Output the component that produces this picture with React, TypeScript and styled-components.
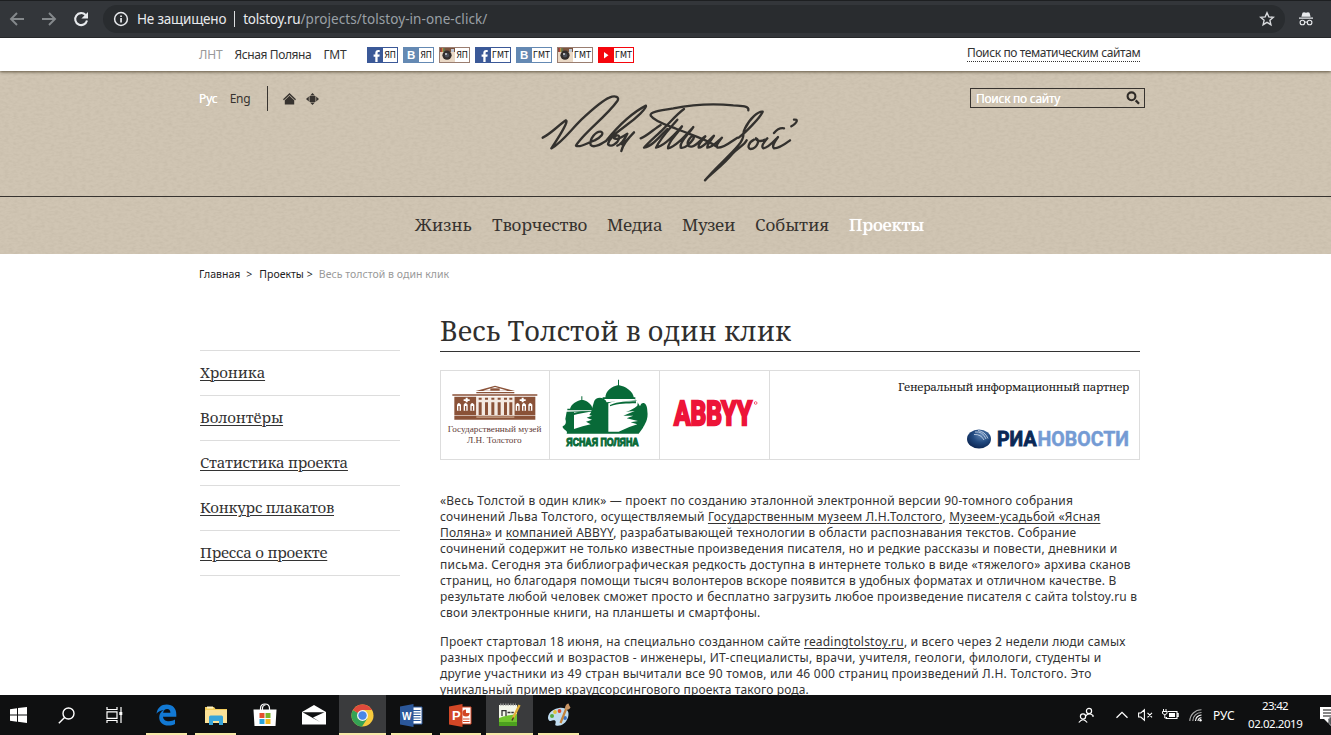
import React from 'react';
import styled, { createGlobalStyle, css } from 'styled-components';

const SANS = '"Noto Sans", "Open Sans", sans-serif';
const SERIF = '"Noto Serif", "Liberation Serif", serif';
const INK = '#37332f';

const GlobalStyle = createGlobalStyle`
  * { box-sizing: border-box; }
  body { margin: 0; overflow: hidden; font-family: ${SANS}; font-size: 12px; color: #333; background: #fff; }
  svg { display: block; flex: none; overflow: visible; }
`;

const Screen = styled.div`
  height: 735px;
  display: flex;
  flex-direction: column;
  overflow: hidden;
`;

const Tracked = styled.span<{ $track?: number }>`
  letter-spacing: ${p => p.$track ?? 0}px;
  white-space: nowrap;
`;

/* ---------- browser bar ---------- */

const BrowserBar = styled.div`
  flex: none;
  height: 38px;
  padding: 4px 16px 4px 8px;
  display: flex;
  align-items: center;
  background: #33363a;
  border-top: 1px solid #1d1f21;
  border-bottom: 1px solid #26282a;
`;

const NavButtons = styled.div`
  display: flex;
  gap: 14px;
  width: 95px;
`;

const AddressPill = styled.div`
  width: 1182px;
  height: 28px;
  margin-right: 13px;
  padding: 0 10px;
  border-radius: 14px;
  display: flex;
  align-items: center;
  background: #292c2f;
  color: #e8eaed;
  font-size: 13.5px;
`;

const Warning = styled(Tracked)`
  margin-left: 8px;
`;

const PillDivider = styled.div`
  width: 1px;
  height: 16px;
  margin: 0 8px 0 8px;
  background: #dcdee0;
`;

const UrlPath = styled(Tracked)`
  flex: 1;
  color: #9aa0a6;
`;

/* ---------- site top bar ---------- */

const Page = styled.div`
  flex: 1;
  min-height: 0;
  overflow: hidden;
`;

const TopBar = styled.div`
  position: relative;
  z-index: 1;
  height: 33px;
  padding: 0 0 0 199px;
  width: 1331px;
  display: flex;
  align-items: center;
  background: #fff;
  box-shadow: 0 1px 3px rgba(60, 50, 30, 0.75);
`;

const SiteLinks = styled.div`
  display: flex;
  gap: 12px;
  width: 168px;
`;

const SiteLink = styled(Tracked)<{ $muted?: boolean }>`
  color: ${p => (p.$muted ? '#999' : '#333')};
`;

const SocialList = styled.div`
  display: flex;
  gap: 5px;
  width: 600px;
`;

const SocialBadge = styled.div<{ $color: string; $wide?: boolean }>`
  width: ${p => (p.$wide ? 36 : 31)}px;
  height: 16px;
  padding: 1px 1px 1px 0;
  display: flex;
  background: ${p => p.$color};
`;

const BadgeLabel = styled.span`
  flex: 1;
  display: flex;
  align-items: center;
  justify-content: center;
  background: #fff;
  color: #111;
  font: 9px "DejaVu Sans Condensed", sans-serif;
`;

const TopicSearch = styled(Tracked)`
  line-height: 14px;
  height: 16px;
  margin-top: -1px;
  border-bottom: 1px dotted #333;
`;

/* ---------- header ---------- */

const Header = styled.header`
  position: relative;
  height: 183px;
  background: #d0c5b3;
`;

const Texture = styled.svg`
  position: absolute;
  inset: 0;
  width: 100%;
  height: 100%;
`;

const HeaderTop = styled.div`
  position: relative;
  height: 126px;
  padding: 14px 0 0 199px;
  display: grid;
  grid-template-columns: 331px 280px 160px 175px;
  border-bottom: 1px solid ${INK};
`;

const LanguageBar = styled.div`
  height: 27px;
  display: flex;
  align-items: center;
`;

const Language = styled(Tracked)<{ $active?: boolean }>`
  margin-right: 12px;
  color: ${p => (p.$active ? '#fff' : INK)};
  ${p => p.$active && css`text-shadow: 0 0 0.6px #fff;`}
`;

const LanguageDivider = styled.div`
  width: 1px;
  height: 25px;
  margin: 0 15px 0 4px;
  background: ${INK};
`;

const HeaderIcons = styled.div`
  display: flex;
  gap: 10px;
`;

const SearchBox = styled.div`
  grid-column: 4;
  height: 20px;
  margin-top: 3px;
  padding: 0 4px 0 5px;
  display: flex;
  align-items: center;
  justify-content: space-between;
  border: 1px solid ${INK};
  color: #fff;
  text-shadow: 0 0 0.6px #fff;
`;

const MainNav = styled.nav`
  position: relative;
  height: 55px;
  padding-left: 415px;
  display: flex;
  gap: 20px;
  align-items: center;
  font: 17px/26px ${SERIF};
  color: ${INK};
`;

const NavItem = styled(Tracked)<{ $width: number; $active?: boolean }>`
  width: ${p => p.$width}px;
  color: ${p => (p.$active ? '#fff' : 'inherit')};
  ${p => p.$active && css`text-shadow: 0 0 0.8px #fff;`}
`;

/* ---------- content ---------- */

const Breadcrumbs = styled.div`
  height: 40px;
  padding-left: 199px;
  display: flex;
  align-items: center;
  font-size: 10.5px;
`;

const Crumb = styled(Tracked)<{ $gap?: number; $muted?: boolean }>`
  margin-right: ${p => p.$gap ?? 0}px;
  color: ${p => (p.$muted ? '#999' : '#222')};
`;

const Columns = styled.div`
  display: grid;
  grid-template-columns: 201px 700px;
  column-gap: 39px;
  padding-left: 200px;
`;

const SideMenu = styled.ul`
  list-style: none;
  width: 200px;
  margin: 56px 0 0;
  padding: 0;
  border-top: 1px solid #ddd;
`;

const SideItem = styled.li`
  height: 45px;
  border-bottom: 1px solid #ddd;
  font: 15px/43px ${SERIF};
`;

const SideLink = styled(Tracked)`
  text-decoration: underline;
  text-underline-offset: 1.5px;
  text-decoration-thickness: 1px;
`;

const Title = styled.h1`
  height: 38px;
  margin: 20px 0 18px;
  border-bottom: 1px solid #333;
  font: 27px/34px ${SERIF};
  color: #302f2e;
`;

const Partners = styled.div`
  height: 90px;
  margin-bottom: 33px;
  display: flex;
  border: 1px solid #ddd;
`;

const PartnerCell = styled.div`
  width: 110px;
  border-right: 1px solid #ddd;
  &:first-child { width: 109px; }
`;

const MediaPartner = styled.div`
  flex: 1;
  padding: 7px 9px 0 0;
  display: flex;
  flex-direction: column;
  align-items: flex-end;
  gap: 32px;
  font: 11.5px/18px ${SERIF};
  color: #222;
`;

const PartnerCaption = styled(Tracked)`
  margin-right: 1px;
`;

const Paragraph = styled.p`
  margin: 0 0 13px;
  line-height: 16px;
`;

const Line = styled(Tracked)`
  display: block;
`;

const Link = styled.span`
  text-decoration: underline;
  text-underline-offset: 1.5px;
  text-decoration-thickness: 1px;
`;

/* ---------- taskbar ---------- */

const Taskbar = styled.div`
  flex: none;
  height: 40px;
  width: 1345px;
  margin-left: -5px;
  display: flex;
  background: #0f1011;
`;

const SystemSlot = styled.div`
  width: 48px;
  display: flex;
  align-items: center;
  justify-content: center;
`;

const AppList = styled.div`
  display: flex;
  margin-left: 4px;
  width: 940px;
`;

const AppSlot = styled.div<{ $open?: boolean; $active?: boolean }>`
  width: ${p => (p.$active ? 47 : 41)}px;
  margin: ${p => (p.$active ? '0 1px' : '0 4px')};
  padding-top: ${p => (p.$open ? 2 : 0)}px;
  display: flex;
  align-items: center;
  justify-content: center;
  background: ${p => (p.$active ? '#3a3b3d' : 'transparent')};
  border-bottom: ${p => (p.$open ? '2px solid #f8e9a8' : 'none')};
`;

const Tray = styled.div`
  display: flex;
  align-items: center;
  color: #fff;
`;

const TrayItem = styled.div<{ $width: number }>`
  width: ${p => p.$width}px;
`;

const Clock = styled.div`
  width: 54px;
  margin-right: 18px;
  text-align: center;
  line-height: 18px;
  font-size: 11.5px;
`;

/* ---------- drawings ---------- */

const Signature = () => (
  <svg width="280" height="110" viewBox="0 0 840 330" fill="none" stroke="#33312e" strokeWidth="7" strokeLinecap="round" strokeLinejoin="round">
    <path d="M38 158C60 148 84 122 108 106C116 108 92 148 64 190C92 176 120 138 154 104C184 76 214 48 238 38C256 30 270 36 262 48C228 96 158 146 138 182C150 190 174 172 194 166C214 156 224 144 212 140C198 138 178 162 182 180C192 190 212 178 228 168C264 124 308 82 348 62C352 68 318 100 290 120C264 140 238 156 234 178C244 188 262 176 268 160C270 148 256 148 252 160C262 166 280 154 292 146C284 164 270 180 262 182M276 178C290 168 300 154 312 142C296 158 278 180 274 198" />
    <path d="M332 160C350 154 372 132 392 120M462 72C440 88 424 108 402 130C380 152 360 168 342 188C366 184 388 156 412 132" />
    <path d="M655 76C658 64 636 62 610 61C560 56 490 58 430 70C384 77 358 82 362 92C374 110 410 120 440 132C484 150 530 162 558 184" />
    <path d="M442 104C420 130 392 158 378 188C402 184 430 154 456 124C440 150 414 168 414 190C436 186 462 156 490 126C474 150 448 170 452 188C464 192 482 174 490 162C496 150 486 150 478 162C468 176 474 188 488 184C502 180 514 162 526 154C516 168 502 178 506 188C520 188 534 168 552 152C544 166 530 178 532 188C546 188 560 172 576 158C566 172 556 180 562 188C582 190 602 170 622 158" />
    <path d="M626 158C650 140 690 98 698 80C686 78 660 98 644 132C634 150 650 150 626 180C600 212 556 248 525 286C548 262 582 238 606 208C622 190 644 180 650 166" />
    <path d="M672 164C656 172 650 190 662 192C680 190 692 166 678 160C676 166 690 172 706 164M712 160C702 172 692 184 700 190C716 188 732 168 744 156C734 170 724 184 732 190C750 190 764 178 780 166M732 144C742 132 752 128 762 130M792 104C804 102 804 112 784 124" />
  </svg>
);

const BackIcon = () => (
  <svg width="18" height="18" viewBox="0 0 18 18" fill="none" stroke="#85898c" strokeWidth="1.9"><path d="M16 9H3M9 3L3 9l6 6" /></svg>
);
const ForwardIcon = () => (
  <svg width="18" height="18" viewBox="0 0 18 18" fill="none" stroke="#85898c" strokeWidth="1.9"><path d="M2 9h13M9 3l6 6-6 6" /></svg>
);
const ReloadIcon = () => (
  <svg width="18" height="18" viewBox="0 0 18 18"><path d="M13.6 5A6 6 0 1 0 15 10.6" fill="none" stroke="#e8eaed" strokeWidth="2.1" /><path d="M16 2v6.6H9.4z" fill="#e8eaed" /></svg>
);
const InfoIcon = () => (
  <svg width="16" height="16" viewBox="0 0 16 16"><circle cx="8" cy="8" r="6.4" fill="none" stroke="#e8eaed" strokeWidth="1.5" /><path d="M7.2 7h1.7v4.4H7.2zM7.2 4.4h1.7V6H7.2z" fill="#e8eaed" /></svg>
);
const StarIcon = () => (
  <svg width="16" height="16" viewBox="0 0 16 16"><path d="M8 1.8l1.8 4.1 4.5.4-3.4 3 1 4.4L8 11.4l-3.9 2.3 1-4.4-3.4-3 4.5-.4z" fill="none" stroke="#d8dadd" strokeWidth="1.4" /></svg>
);
const IncognitoIcon = () => (
  <svg width="16" height="16" viewBox="0 0 16 16" fill="#e8eaed">
    <path d="M1 6.6h14v1.2H1zM3.4 5.7l1.1-4L6 1.2l2 .6 2-.6 1.5.5 1.1 4z" />
    <g fill="none" stroke="#e8eaed" strokeWidth="1.1"><circle cx="4.4" cy="11.5" r="2.3" /><circle cx="11.6" cy="11.5" r="2.3" /><path d="M6.7 11.3q1.3-.7 2.6 0" /></g>
  </svg>
);

const FacebookMark = () => (
  <svg width="16" height="14" viewBox="0 0 16 14"><path d="M8.3 14V8.7H6.6V6.5h1.7V5c0-2 1-3.1 3-3.1h1.4v2.2h-1c-.8 0-1.1.3-1.1 1v1.4h2.1l-.3 2.2h-1.8V14z" fill="#fff" /></svg>
);
const VkMark = () => (
  <svg width="16" height="14" viewBox="0 0 16 14"><text x="4" y="11.3" fontFamily="Liberation Sans" fontSize="11.5" fontWeight="700" fill="#fff">B</text></svg>
);
const InstagramMark = () => (
  <svg width="16" height="14" viewBox="0 0 16 14">
    <path d="M1 0h15v5H1z" fill="#7b543e" /><path d="M1 4h15v10H1z" fill="#ead9c6" />
    <path d="M2 0h1v4H2z" fill="#b8413a" /><path d="M3.3 0h1v4h-1z" fill="#d2a94a" /><path d="M4.6 0h1v4h-1z" fill="#4f8a5a" />
    <path d="M12 1h3v3h-3z" fill="#bfc6d2" />
    <circle cx="8" cy="7.200" r="4.600" fill="#322d2c" /><circle cx="8" cy="7.200" r="2.200" fill="#4c4f58" /><circle cx="7" cy="6" r="1" fill="#d5d8dd" />
  </svg>
);
const YoutubeMark = () => (
  <svg width="16" height="14" viewBox="0 0 16 14"><path d="M6 4l4.5 3.2L6 10.4z" fill="#fff" /></svg>
);

const HomeIcon = () => (
  <svg width="13" height="12" viewBox="0 0 13 12"><path d="M6.5 0L13 6.3l-.9.9-5.6-5.3L.9 7.200 0 6.300z" fill={INK} /><path d="M6.500 2.800l4.700 4.500V11.500H1.800V7.300z" fill={INK} /></svg>
);
const MapIcon = () => (
  <svg width="13" height="12" viewBox="0 0 13 12" fill={INK}><path d="M3.500 3h6v6h-6zM6.500 0l2.400 2.400H4.100zM6.500 12l2.400-2.400H4.100zM0 6l2.800-2.400v4.800zM13 6l-2.800-2.400v4.800z" /></svg>
);
const MagnifierIcon = () => (
  <svg width="14" height="14" viewBox="0 0 14 14" fill="none" stroke="#2f2b27"><circle cx="5.500" cy="5.300" r="3.900" strokeWidth="2.100" /><path d="M9.700 9.400l3.300 3.300" strokeWidth="2.300" /></svg>
);

const MuseumLogo = () => (
  <svg width="108" height="88" viewBox="14 184 324 264" fill="#8a5238">
    <path d="M118 244L176 228l60 16zM120 247h114v4H120zM48 254h255v4H48z" />
    <path d="M140 243l36-11 38 11z" fill="#fff" /><path d="M162 236h28v7h-28z" />
    <path d="M54 261h66v56H54zM234 261h63v56h-63z" />
    <path d="M120 261h114v58H120z" fill="#f3e9e1" />
    {[134, 153, 172, 191, 210, 226].map(x => <path key={x} d={`M${x - 7} 264h9v6h-9zM${x - 7} 278h9v38h-9z`} />)}
    {[62, 82, 102, 238, 257, 276].map(x => <path key={x} d={`M${x} 303v-18q5-10 12 0v18z`} fill="#fff" />)}
    {[66, 86, 106, 242, 261, 280].map(x => <path key={x} d={`M${x} 303v-14h4v14z`} />)}
    <path d="M82 269h18v5H82zM88 264h6v14h-6zM250 269h18v5h-18zM256 264h6v14h-6z" fill="#fff" />
    <path d="M54 318h243v12H54z" /><path d="M120 320h114v5H120z" fill="#b98f75" />
    <g fill="#634039" fontFamily="Liberation Serif" fontSize="24.500">
      <text x="34" y="368" textLength="281" lengthAdjust="spacingAndGlyphs">Государственный музей</text>
      <text x="92" y="399" textLength="164" lengthAdjust="spacingAndGlyphs">Л.Н. Толстого</text>
    </g>
  </svg>
);

const YasnayaLogo = () => (
  <svg width="109" height="88" viewBox="342 184 327 264" fill="#086a38">
    <path d="M546 210h3v20h-3zM508 266C508 242 528 230 547 226C568 230 592 244 594 266zM436 260h3v12h-3zM402 298C406 282 420 274 438 270C456 274 468 284 470 298zM500 263h98v5h-98zM394 297h82v5h-82z" />
    <path d="M392 306L466 304L474 276C478 260 506 260 512 278L600 270L612 290C616 274 634 276 634 304C638 330 626 344 620 356L608 372H392C398 362 378 360 380 350C388 346 392 340 388 328Z" />
    <path d="M517 281C545 268 575 271 606 273L604 288C594 296 584 302 570 306L596 304L562 318L592 318L572 326L606 334L584 338L604 344L580 352L548 366H517Z" fill="#fff" />
    <path d="M522 286C548 275 572 276 600 275V281C572 282 548 281 522 290Z" />
    <path d="M414 308L466 306L460 316L468 318L452 324L468 330L450 336L464 344L440 350L414 358Z" fill="#fff" />
    <path d="M414 310C430 305 445 305 462 306C445 310 430 310 414 316z" />
    <text x="391" y="409" textLength="217" lengthAdjust="spacingAndGlyphs" fontFamily="Liberation Sans" fontWeight="700" fontSize="31" stroke="#086a38" strokeWidth="3">ЯСНАЯ ПОЛЯНА</text>
  </svg>
);

const AbbyyLogo = () => (
  <svg width="109" height="88" viewBox="672 184 327 264" fill="#ed1438">
    <text x="714" y="346" textLength="234" lengthAdjust="spacingAndGlyphs" fontFamily="Roboto" fontWeight="700" fontSize="98" stroke="#ed1438" strokeWidth="7">ABBYY</text>
    <circle cx="959" cy="280" r="4" fill="none" stroke="#ed1438" strokeWidth="2" />
  </svg>
);

const RiaLogo = () => (
  <svg width="164" height="22" viewBox="0 0 164 22">
    <defs><radialGradient id="globe" cx=".6" cy=".3" r=".75"><stop offset="0" stopColor="#6086b5" /><stop offset=".5" stopColor="#21497f" /><stop offset="1" stopColor="#0b2450" /></radialGradient></defs>
    <ellipse cx="13" cy="11" rx="12" ry="9.500" fill="url(#globe)" />
    <path d="M9 4q8-1 11 7M12 2.500q7 1 10 8M8 6.500q7-.5 10 5.500" fill="none" stroke="#cfdcee" strokeWidth=".8" />
    <g fontFamily="Roboto" fontWeight="700" fontSize="20">
      <text x="31" y="18" textLength="39.500" lengthAdjust="spacingAndGlyphs" fill="#0a2856" stroke="#0a2856" strokeWidth=".8">РИА</text>
      <text x="71.500" y="18" textLength="91.500" lengthAdjust="spacingAndGlyphs" fill="#749bd4" stroke="#749bd4" strokeWidth=".5">НОВОСТИ</text>
    </g>
  </svg>
);

const WindowsIcon = () => (
  <svg width="17" height="16" viewBox="0 0 17 16" fill="#fff"><path d="M0 2.200l7-1v6.300H0zM8 1.100L17 0v7.500H8zM0 8.500h7v6.300l-7-1zM8 8.500h9V16l-9-1.200z" /></svg>
);
const TaskSearchIcon = () => (
  <svg width="17" height="17" viewBox="0 0 17 17" fill="none" stroke="#fff" strokeWidth="1.400"><circle cx="10.500" cy="6.500" r="5.500" /><path d="M6.600 10.400L.8 16.200" /></svg>
);
const TaskViewIcon = () => (
  <svg width="17" height="16" viewBox="0 0 17 16" fill="none" stroke="#fff" strokeWidth="1.200"><path d="M1 0v2.500h10V0M1 16v-2.500h10V16M1 4.800h10v6.500H1zM15 0v16" /><path d="M13.300 5h3v3h-3z" fill="#fff" stroke="none" /></svg>
);
const EdgeIcon = () => (
  <svg width="21" height="22" viewBox="0 0 21 22"><path d="M.5 9.800C1.300 3.800 5.200.5 10.700.5c6.200 0 9.600 4.200 9.600 9.700v2.500H7c.2 3.200 2.900 4.500 6 4.500 2.400 0 4.300-.6 6-1.600v4.500c-1.900 1-4.200 1.500-6.600 1.500-5.500 0-9.200-3.200-9.200-8.300 0-3.300 1.800-5.900 4.600-7.300C4.600 6.300 2.200 7.500.5 9.800zM7.100 8.800h7.300c0-2.200-1.100-3.700-3.300-3.700-2.100 0-3.600 1.400-4 3.700z" fill="#1279d4" /></svg>
);
const ExplorerIcon = () => (
  <svg width="22" height="19" viewBox="0 0 22 19"><path d="M0 1h9l1.500 2H22v14H0z" fill="#f3cd5d" /><path d="M1 4h21v13H0V5z" fill="#fbe298" /><path d="M4 19v-8q0-1.500 1.500-1.500h11Q18 9.500 18 11v8h-4v-4H8v4z" fill="#38a5da" /><path d="M2 .5h6v2H2z" fill="#fff3c4" /></svg>
);
const StoreIcon = () => (
  <svg width="24" height="24" viewBox="0 0 24 24"><path d="M7.500 8V5.500q0-4.500 4.500-4.500t4.500 4.500V8M9.500 7q-.5-5 3-5" fill="none" stroke="#fff" strokeWidth="1.200" /><path d="M.5 6.500h23l-1 16.500h-21z" fill="#fff" /><path d="M6.500 10h5v5h-5z" fill="#e5502d" /><path d="M12.500 10h5v5h-5z" fill="#7db52a" /><path d="M6.500 16h5v5h-5z" fill="#2aa3dd" /><path d="M12.500 16h5v5h-5z" fill="#f5b81f" /></svg>
);
const MailIcon = () => (
  <svg width="24" height="20" viewBox="0 0 24 20"><path d="M0 7L12 0l12 7v12.500H0z" fill="#fff" /><path d="M.5 7.200h22L11 12.500l7 4.500z" fill="#101112" /></svg>
);
const ChromeIcon = () => (
  <svg width="23" height="23" viewBox="0 0 24 24"><circle cx="12" cy="12" r="11.500" fill="#f7ca3d" /><path d="M2 6.300A11.500 11.500 0 0 0 11.500 23.500L17 15 12 12z" fill="#35a355" /><path d="M2 6.300A11.500 11.500 0 0 1 22 6.300H12v6z" fill="#df4a3c" /><circle cx="12" cy="12" r="5.700" fill="#f4f6f8" /><circle cx="12" cy="12" r="4.400" fill="#4a86e8" /></svg>
);
const WordIcon = () => (
  <svg width="23" height="23" viewBox="0 0 23 23"><path d="M11 3h11v17H11z" fill="#fff" stroke="#2b579a" /><path d="M13 6.500h7.500M13 9h7.500M13 11.500h7.500M13 14h7.500M13 16.500h7.500" stroke="#2b579a" /><path d="M0 2.500L13.500 0v23L0 20.500z" fill="#2b579a" /><text x="2" y="15.500" fontFamily="Liberation Sans" fontWeight="700" fontSize="11" textLength="9.500" lengthAdjust="spacingAndGlyphs" fill="#fff">W</text></svg>
);
const PowerPointIcon = () => (
  <svg width="23" height="23" viewBox="0 0 23 23"><path d="M11 3h11v17H11z" fill="#fff" stroke="#d24726" /><path d="M14 15h6.500M14 17.500h6.500" stroke="#d24726" /><circle cx="17" cy="9" r="3.600" fill="#d24726" /><path d="M17 9V5h4v4z" fill="#fff" /><path d="M0 2.500L13.500 0v23L0 20.500z" fill="#d24726" /><text x="3" y="16" fontFamily="Liberation Sans" fontWeight="700" fontSize="13" fill="#fff">P</text></svg>
);
const NotepadIcon = () => (
  <svg width="23" height="24" viewBox="0 0 23 24"><path d="M1 2h18v21H1z" fill="#f4f7ec" /><path d="M1 15q9-3 18-4v12H1z" fill="#72c62f" /><path d="M1 19h18v4H1z" fill="#4ca01f" /><path d="M2 1.500h16" stroke="#8d8f8d" strokeWidth="2" strokeDasharray="1.500 1" /><path d="M4 13V7M4 7.700h4V13M9.500 9.500h3M13.300 9.500h2.500" fill="none" stroke="#333" strokeWidth="1.300" /><path d="M21.500 2L14.500 16" stroke="#e2b13a" strokeWidth="2.400" /><path d="M15.500 14.500l-1.500 3" stroke="#4b3a23" strokeWidth="1.500" /></svg>
);
const PaintIcon = () => (
  <svg width="24" height="24" viewBox="0 0 24 24"><path d="M12 5C20 4 23 9 21 14.500C19 20.500 14 23.500 9 22.500C7 22 10 19 8 17.500C6 16.500 4 19 2 17.500C-1 14 3 6 12 5z" fill="#bfdcf0" /><circle cx="5" cy="13" r="2" fill="#57a83e" /><circle cx="8" cy="9" r="1.900" fill="#e2c13b" /><circle cx="12.500" cy="8" r="1.900" fill="#d6492f" /><circle cx="18" cy="15" r="1.900" fill="#3a70bf" /><path d="M19.500 5L13.500 20" stroke="#c2823c" strokeWidth="2.200" /><path d="M18 6q0-5 3.500-5.500q1 3 2 4-2 3.500-5.500 1.500z" fill="#c99564" /></svg>
);

const PeopleIcon = () => (
  <svg width="16" height="17" viewBox="0 0 16 17" fill="none" stroke="#fff" strokeWidth="1.200"><circle cx="11" cy="4" r="2.600" /><path d="M7.500 9Q11 5 15 8.500V10" /><circle cx="5" cy="9.500" r="2.600" /><path d="M.8 15.500Q5 10 9.200 15.500" /></svg>
);
const ChevronIcon = () => (
  <svg width="12" height="8" viewBox="0 0 12 8" fill="none" stroke="#fff" strokeWidth="1.300"><path d="M.5 6.800L6 1.300l5.500 5.500" /></svg>
);
const MutedIcon = () => (
  <svg width="16" height="12" viewBox="0 0 16 12" fill="none" stroke="#fff" strokeWidth="1.100"><path d="M.6 4h2.200L6.400.8v10.400L2.800 8H.6zM9.500 3.800l4.500 4.500M14 3.800L9.500 8.300" /></svg>
);
const BatteryIcon = () => (
  <svg width="17" height="12" viewBox="0 0 17 12"><path d="M5.500 2.500h9.500v7H4.500V8M15 4.500h1.200v3H15" fill="none" stroke="#fff" strokeWidth="1.100" /><path d="M7 4h6v4H7z" fill="#fff" /><path d="M1.500 0v2.500M4 0v2.500M.5 2.500h4.500v2q-2.200 2.500-4.500 0zM2.800 5.500V9h2" fill="none" stroke="#fff" /></svg>
);
const WifiIcon = () => (
  <svg width="13" height="13" viewBox="0 0 13 13" fill="none" stroke="#aaa" strokeWidth="1.100"><path d="M.8 12A11.500 11.500 0 0 1 12.500.8M3.800 12a8.500 8.500 0 0 1 8.700-8.500" /><path d="M6.500 12a6 6 0 0 1 6-6M9 12a3.500 3.500 0 0 1 3.500-3.300" stroke="#fff" /><circle cx="11.500" cy="11.200" r="1.200" fill="#fff" stroke="none" /></svg>
);
const NotificationIcon = () => (
  <svg width="20" height="22" viewBox="0 0 20 22"><path d="M0 3h18v12H8v4l-4-4H0z" fill="#fff" /><path d="M3 6h12M3 9h12M3 12h8" stroke="#111" strokeWidth="1.100" /><circle cx="14" cy="17" r="5.500" fill="#55585b" stroke="#a9abad" /></svg>
);

/* ---------- data ---------- */

const socials = [
  { mark: <FacebookMark />, color: '#3b5998', label: 'ЯП' },
  { mark: <VkMark />, color: '#6489b3', label: 'ЯП' },
  { mark: <InstagramMark />, color: '#9a7d70', label: 'ЯП' },
  { mark: <FacebookMark />, color: '#3b5998', label: 'ГМТ' },
  { mark: <VkMark />, color: '#6489b3', label: 'ГМТ' },
  { mark: <InstagramMark />, color: '#9a7d70', label: 'ГМТ' },
  { mark: <YoutubeMark />, color: '#f5060d', label: 'ГМТ' },
];

const navItems: [string, number, number][] = [
  ['Жизнь', 57, 0], ['Творчество', 95, -0.2], ['Медиа', 55, -0.35],
  ['Музеи', 53, -0.3], ['События', 74, 0], ['Проекты', 75, -0.15],
];

const sideItems: [string, number][] = [
  ['Хроника', -0.1], ['Волонтёры', -0.13], ['Статистика проекта', -0.23], ['Конкурс плакатов', -0.22], ['Пресса о проекте', -0.18],
];

export default function App() {
  return (
    <Screen>
      <GlobalStyle />
      <BrowserBar>
        <NavButtons><BackIcon /><ForwardIcon /><ReloadIcon /></NavButtons>
        <AddressPill>
          <InfoIcon />
          <Warning $track={-0.2}>Не защищено</Warning>
          <PillDivider />
          <Tracked $track={-0.25}>tolstoy.ru</Tracked>
          <UrlPath $track={0.08}>/projects/tolstoy-in-one-click/</UrlPath>
          <StarIcon />
        </AddressPill>
        <IncognitoIcon />
      </BrowserBar>

      <Page>
        <TopBar>
          <SiteLinks>
            <SiteLink $muted $track={-0.2}>ЛНТ</SiteLink>
            <SiteLink $track={-0.38}>Ясная Поляна</SiteLink>
            <SiteLink $track={-0.2}>ГМТ</SiteLink>
          </SiteLinks>
          <SocialList>
            {socials.map((s, i) => (
              <SocialBadge key={i} $color={s.color} $wide={s.label.length > 2}>
                {s.mark}
                <BadgeLabel>{s.label}</BadgeLabel>
              </SocialBadge>
            ))}
          </SocialList>
          <TopicSearch $track={-0.4}>Поиск по тематическим сайтам</TopicSearch>
        </TopBar>

        <Header>
          <Texture>
            <filter id="paper" x="0" y="0" width="100%" height="100%">
              <feTurbulence type="fractalNoise" baseFrequency="0.22 0.42" numOctaves="2" seed="4" />
              <feColorMatrix values="0 0 0 0 0.47  0 0 0 0 0.41  0 0 0 0 0.32  0.6 0 0 0 -0.22" />
            </filter>
            <rect width="100%" height="100%" filter="url(#paper)" />
          </Texture>
          <HeaderTop>
            <LanguageBar>
              <Language $active $track={-0.1}>Рус</Language>
              <Language $track={-0.2}>Eng</Language>
              <LanguageDivider />
              <HeaderIcons><HomeIcon /><MapIcon /></HeaderIcons>
            </LanguageBar>
            <Signature />
            <SearchBox><Tracked $track={-0.28}>Поиск по сайту</Tracked><MagnifierIcon /></SearchBox>
          </HeaderTop>
          <MainNav>
            {navItems.map(([label, width, track], i) => (
              <NavItem key={label} $width={width} $track={track} $active={i === 5}>{label}</NavItem>
            ))}
          </MainNav>
        </Header>

        <Breadcrumbs>
          <Crumb $gap={6}>Главная</Crumb>
          <Crumb $gap={7}>&gt;</Crumb>
          <Crumb $gap={3}>Проекты</Crumb>
          <Crumb $gap={6}>&gt;</Crumb>
          <Crumb $muted $track={0.03}>Весь толстой в один клик</Crumb>
        </Breadcrumbs>

        <Columns>
          <SideMenu>
            {sideItems.map(([label, track]) => (
              <SideItem key={label}><SideLink $track={track}>{label}</SideLink></SideItem>
            ))}
          </SideMenu>
          <main>
            <Title><Tracked $track={0.1}>Весь Толстой в один клик</Tracked></Title>
            <Partners>
              <PartnerCell><MuseumLogo /></PartnerCell>
              <PartnerCell><YasnayaLogo /></PartnerCell>
              <PartnerCell><AbbyyLogo /></PartnerCell>
              <MediaPartner>
                <PartnerCaption $track={-0.31}>Генеральный информационный партнер</PartnerCaption>
                <RiaLogo />
              </MediaPartner>
            </Partners>
            <Paragraph>
              <Line $track={0.21}>«Весь Толстой в один клик» — проект по созданию эталонной электронной версии 90-томного собрания</Line>
              <Line $track={0.2}>сочинений Льва Толстого, осуществляемый <Link>Государственным музеем Л.Н.Толстого</Link>, <Link>Музеем-усадьбой «Ясная</Link></Line>
              <Line $track={0.2}><Link>Поляна»</Link> и <Link>компанией ABBYY</Link>, разрабатывающей технологии в области распознавания текстов. Собрание</Line>
              <Line $track={0.2}>сочинений содержит не только известные произведения писателя, но и редкие рассказы и повести, дневники и</Line>
              <Line $track={0.24}>письма. Сегодня эта библиографическая редкость доступна в интернете только в виде «тяжелого» архива сканов</Line>
              <Line $track={0.19}>страниц, но благодаря помощи тысяч волонтеров вскоре появится в удобных форматах и отличном качестве. В</Line>
              <Line $track={0.235}>результате любой человек сможет просто и бесплатно загрузить любое произведение писателя с сайта tolstoy.ru в</Line>
              <Line $track={0.19}>свои электронные книги, на планшеты и смартфоны.</Line>
            </Paragraph>
            <Paragraph>
              <Line $track={0.2}>Проект стартовал 18 июня, на специально созданном сайте <Link>readingtolstoy.ru</Link>, и всего через 2 недели люди самых</Line>
              <Line $track={0.26}>разных профессий и возрастов - инженеры, ИТ-специалисты, врачи, учителя, геологи, филологи, студенты и</Line>
              <Line $track={0.26}>другие участники из 49 стран вычитали все 90 томов, или 46 000 страниц произведений Л.Н. Толстого. Это</Line>
              <Line $track={0.15}>уникальный пример краудсорсингового проекта такого рода.</Line>
            </Paragraph>
          </main>
        </Columns>
      </Page>

      <Taskbar>
        <SystemSlot><WindowsIcon /></SystemSlot>
        <SystemSlot><TaskSearchIcon /></SystemSlot>
        <SystemSlot><TaskViewIcon /></SystemSlot>
        <AppList>
          <AppSlot $open><EdgeIcon /></AppSlot>
          <AppSlot $open><ExplorerIcon /></AppSlot>
          <AppSlot><StoreIcon /></AppSlot>
          <AppSlot><MailIcon /></AppSlot>
          <AppSlot $open $active><ChromeIcon /></AppSlot>
          <AppSlot $open><WordIcon /></AppSlot>
          <AppSlot $open><PowerPointIcon /></AppSlot>
          <AppSlot $open $active><NotepadIcon /></AppSlot>
          <AppSlot $open><PaintIcon /></AppSlot>
        </AppList>
        <Tray>
          <TrayItem $width={38}><PeopleIcon /></TrayItem>
          <TrayItem $width={22}><ChevronIcon /></TrayItem>
          <TrayItem $width={24}><MutedIcon /></TrayItem>
          <TrayItem $width={27}><BatteryIcon /></TrayItem>
          <TrayItem $width={24}><WifiIcon /></TrayItem>
          <TrayItem $width={35}>РУС</TrayItem>
          <Clock><Tracked $track={-0.7}>23:42</Tracked><br /><Tracked $track={-0.45}>02.02.2019</Tracked></Clock>
          <NotificationIcon />
        </Tray>
      </Taskbar>
    </Screen>
  );
}
